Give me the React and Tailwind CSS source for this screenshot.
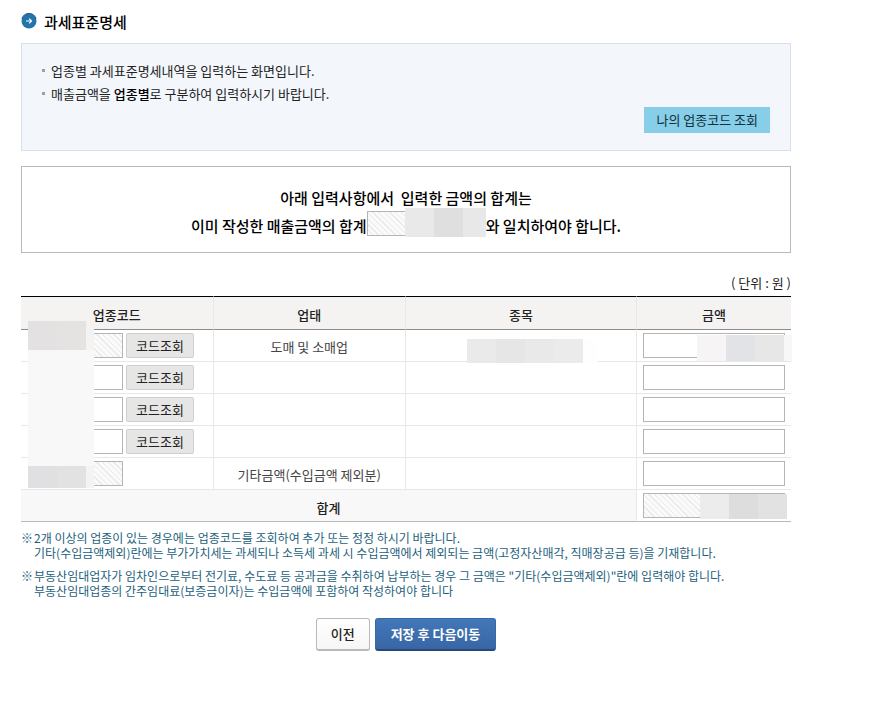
// Tax base breakdown page: notice box, total check banner, industry code table,
// footnotes and the prev / save buttons.
import { useState } from 'react'

const ROWS = [
  { id: 1, type: '도매 및 소매업', lookup: true, readOnly: true },
  { id: 2, type: '', lookup: true },
  { id: 3, type: '', lookup: true },
  { id: 4, type: '', lookup: true },
  { id: 5, type: '기타금액(수입금액 제외분)', lookup: false, readOnly: true },
]

const NOTES = [
  [
    '2개 이상의 업종이 있는 경우에는 업종코드를 조회하여 추가 또는 정정 하시기 바랍니다.',
    '기타(수입금액제외)란에는 부가가치세는 과세되나 소득세 과세 시 수입금액에서 제외되는 금액(고정자산매각, 직매장공급 등)을 기재합니다.',
  ],
  [
    '부동산임대업자가 임차인으로부터 전기료, 수도료 등 공과금을 수취하여 납부하는 경우 그 금액은 "기타(수입금액제외)"란에 입력해야 합니다.',
    '부동산임대업종의 간주임대료(보증금이자)는 수입금액에 포함하여 작성하여야 합니다',
  ],
]

const FIELD = 'block h-[25px] border border-[#b5b5b5] px-1 text-right text-[13px] outline-none focus:border-[#3b6fb0]'
const HATCH = 'bg-[repeating-linear-gradient(45deg,#fafafa_0px,#fafafa_3px,#e9e9e9_3px,#e9e9e9_4px)]'

function ArrowIcon() {
  return (
    <svg width="16" height="16" viewBox="0 0 16 16" aria-hidden="true">
      <circle cx="8" cy="8" r="7.5" fill="#2474ab" />
      <path d="M1 6a7.2 7.2 0 0 1 14 0" fill="none" stroke="#1a5685" strokeWidth="1" />
      <path d="M5 8h5.5M8.2 5.7 10.5 8l-2.3 2.3" fill="none" stroke="#fff" strokeWidth="1.2" />
    </svg>
  )
}

// Blocks that hide private values
function Mask({ className, tones }) {
  return (
    <span aria-hidden="true" className={`pointer-events-none absolute z-10 flex ${className}`}>
      {tones.map((tone, i) => (
        <span key={i} className={`h-full ${tone}`} />
      ))}
    </span>
  )
}

function CodeMask() {
  return (
    <div aria-hidden="true" className="pointer-events-none absolute top-[25px] left-[7px] z-10 w-[66px] bg-[#f8f8f8]">
      <div className="flex h-[29px]">
        <span className="w-[29px] bg-[#e3e1e2]" />
        <span className="w-[29px] bg-[#e4e3e2]" />
        <span className="flex-1 bg-[#f4f3f2]" />
      </div>
      <div className="h-[116px]" />
      <div className="flex h-[22px]">
        <span className="w-[29px] bg-[#e0e0e3]" />
        <span className="w-[29px] bg-[#e2e2e2]" />
        <span className="flex-1 bg-[#f3f3f3]" />
      </div>
    </div>
  )
}

function App() {
  const [codes, setCodes] = useState({})
  const [amounts, setAmounts] = useState({})

  return (
    <main className="max-w-[812px] px-[21px] pt-[13px] pb-10 font-['Noto_Sans_CJK_KR','Liberation_Sans',sans-serif] text-[13px] text-[#222]">
      <header className="flex h-[30px] items-start gap-[7px]">
        <ArrowIcon />
        <h1 className="text-[15px] leading-[18px] font-medium text-black">과세표준명세</h1>
      </header>

      <section className="border border-[#d8e1ea] bg-[#f3f7fc] px-5 pt-[15px] pb-[17px]">
        <ul className="leading-[23px]">
          <li className="flex gap-[6px]">
            <span className="mt-[10px] h-[3px] w-[3px] bg-[#9aa0a8]" />
            <span>업종별 과세표준명세내역을 입력하는 화면입니다.</span>
          </li>
          <li className="flex gap-[6px]">
            <span className="mt-[10px] h-[3px] w-[3px] bg-[#9aa0a8]" />
            <span>
              매출금액을 <strong className="font-medium text-black">업종별</strong>로 구분하여 입력하시기 바랍니다.
            </span>
          </li>
        </ul>
        <div className="mt-[2px] flex justify-end">
          <button type="button" className="h-[26px] bg-[#87cee8] px-3 text-[13px] text-[#12303d]">
            나의 업종코드 조회
          </button>
        </div>
      </section>

      <section className="mt-[15px] border border-[#b9b9b9] px-4 pt-[18px] pb-3 text-center text-[15px] leading-[26px] font-medium text-black">
        <p className="whitespace-pre-wrap">아래 입력사항에서  입력한 금액의 합계는</p>
        <p className="flex items-center justify-center">
          <label htmlFor="sales-total">이미 작성한 매출금액의 합계</label>
          <span className="relative mb-1">
            <input id="sales-total" readOnly className={`${FIELD} ${HATCH} w-[119px]`} />
            <Mask
              className="-top-[3px] right-0 h-[29px]"
              tones={['w-[29px] bg-[#e9e9e9]', 'w-[29px] bg-[#dfdfdf]', 'w-[23px] bg-[#e8e8e8]']}
            />
          </span>
          <span>와 일치하여야 합니다.</span>
        </p>
      </section>

      <p className="mt-5 text-right leading-[20px]">( 단위 : 원 )</p>

      <div className="relative mt-[3px]">
        <CodeMask />
        <table className="w-full table-fixed border-separate border-spacing-0 text-center">
          <colgroup>
            <col className="w-[25%]" />
            <col className="w-[25%]" />
            <col className="w-[30%]" />
            <col className="w-[20%]" />
          </colgroup>
          <thead>
            <tr className="h-[34px] bg-[#f4f3f2]">
              {['업종코드', '업태', '종목', '금액'].map((h) => (
                <th
                  key={h}
                  scope="col"
                  className="border-t border-r border-b border-t-black border-r-[#e8e8e8] border-b-[#8c8c8c] p-0 pt-[3px] font-medium last:border-r-0"
                >
                  {h}
                </th>
              ))}
            </tr>
          </thead>
          <tbody>
            {ROWS.map((row) => (
              <tr key={row.id} className="h-8">
                <td className="border-r border-b border-[#e8e8e8] p-0 pl-[19px]">
                  <div className="flex gap-[3px]">
                    <input
                      aria-label={`업종코드 ${row.id}`}
                      readOnly={row.readOnly}
                      value={codes[row.id] || ''}
                      onChange={(e) => setCodes({ ...codes, [row.id]: e.target.value })}
                      className={`${FIELD} w-[83px] ${row.readOnly ? HATCH : 'bg-white'}`}
                    />
                    {row.lookup && (
                      <button
                        type="button"
                        className="h-[25px] w-[68px] rounded-[2px] border border-[#cfcfcf] bg-[#e6e6e6] text-[13px] leading-[23px]"
                      >
                        코드조회
                      </button>
                    )}
                  </div>
                </td>
                <td className="border-r border-b border-[#e8e8e8] p-0 pt-[2px] text-[#444]">{row.type}</td>
                <td className="relative border-r border-b border-[#e8e8e8] p-0">
                  {row.id === 1 && (
                    <Mask
                      className="top-[9px] left-[61px] h-6"
                      tones={[
                        'w-[29px] bg-[#eaeaea]',
                        'w-[29px] bg-[#e6e6e6]',
                        'w-[29px] bg-[#e9e9e9]',
                        'w-[29px] bg-[#ebebeb]',
                        'w-[15px] bg-[#fefefe]',
                      ]}
                    />
                  )}
                </td>
                <td className="relative border-b border-[#e8e8e8] p-0 pr-[6px] pl-[6px]">
                  <input
                    aria-label={`금액 ${row.id}`}
                    value={amounts[row.id] || ''}
                    onChange={(e) => setAmounts({ ...amounts, [row.id]: e.target.value })}
                    className={`${FIELD} w-full bg-white`}
                  />
                  {row.id === 1 && (
                    <Mask
                      className="top-[5px] -right-px h-[26px]"
                      tones={[
                        'w-[29px] bg-[#f6f4f5]',
                        'w-[29px] bg-[#e2e3e6]',
                        'w-[29px] bg-[#e7e7e7]',
                        'w-2 bg-[#f7f7f7]',
                      ]}
                    />
                  )}
                </td>
              </tr>
            ))}
          </tbody>
          <tfoot>
            <tr className="h-8">
              <th
                scope="row"
                colSpan={3}
                className="border-r border-b border-r-[#e8e8e8] border-b-[#b9b9b9] bg-[#f8f8f8] p-0 pt-[5px] font-medium"
              >
                합계
              </th>
              <td className="relative border-b border-[#b9b9b9] p-0 pr-[6px] pl-[6px]">
                <input aria-label="합계" readOnly className={`${FIELD} ${HATCH} w-full`} />
                <Mask
                  className="top-1 right-1 h-[25px]"
                  tones={['w-[29px] bg-[#ececec]', 'w-[29px] bg-[#dddddd]', 'w-[29px] bg-[#e2e2e2]']}
                />
              </td>
            </tr>
          </tfoot>
        </table>
      </div>

      <ul className="mt-2 space-y-2 text-[12px] leading-[15px] text-[#1d5f7d]">
        {NOTES.map((lines) => (
          <li key={lines[0]} className="flex gap-px">
            <span>※</span>
            <p>
              {lines[0]}
              <br />
              {lines[1]}
            </p>
          </li>
        ))}
      </ul>

      <div className="mt-5 flex justify-center gap-[5px]">
        <button
          type="button"
          className="h-[33px] rounded-[3px] border border-b-2 border-[#b9b9b9] bg-linear-to-b from-white to-[#f6f6f6] px-[14px] text-[13px] font-medium"
        >
          이전
        </button>
        <button
          type="button"
          className="h-[33px] rounded-[3px] border border-b-2 border-[#3968a8] border-b-[#28497a] bg-linear-to-b from-[#4377b8] to-[#3866a5] px-[15px] text-[13px] font-bold text-white"
        >
          저장 후 다음이동
        </button>
      </div>
    </main>
  )
}

export default App
